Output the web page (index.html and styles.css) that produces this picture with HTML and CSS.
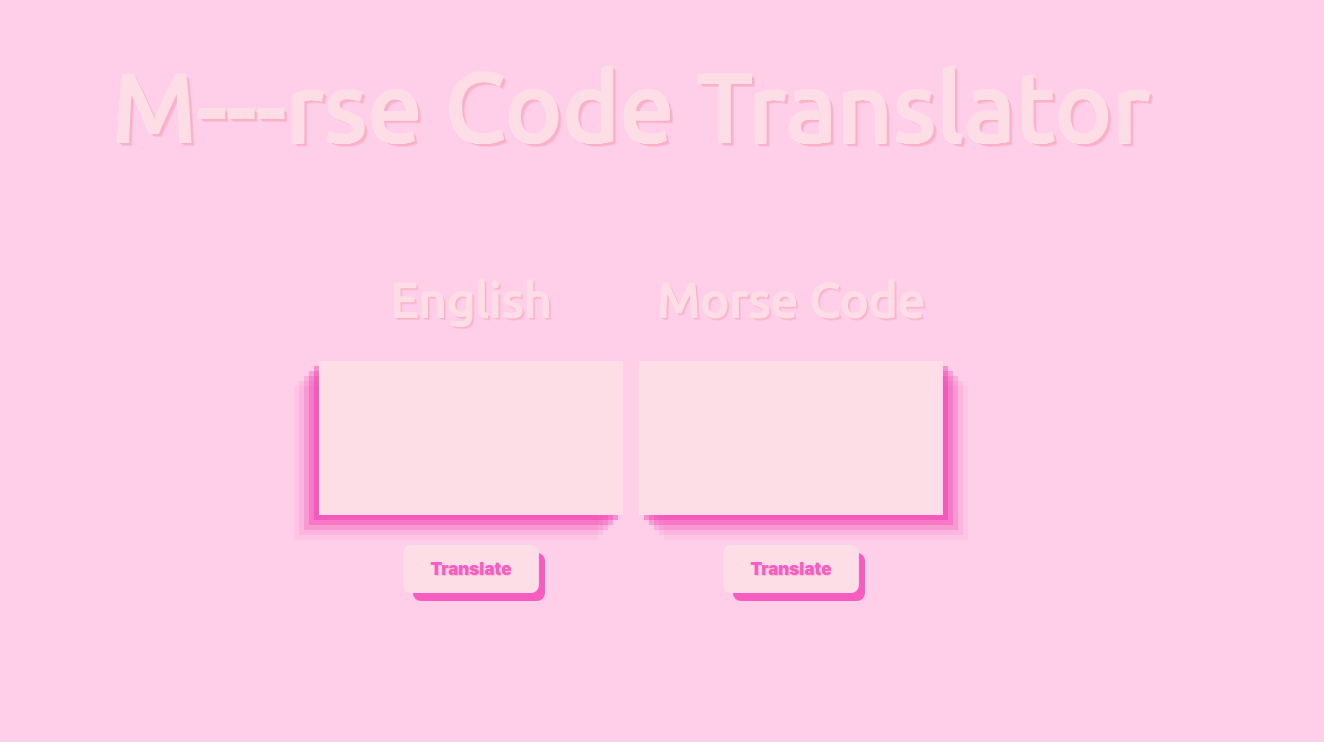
FILE: index.html
```html
<!DOCTYPE html>
<html lang="en">
<head>
<meta charset="utf-8">
<meta name="viewport" content="width=device-width, initial-scale=1">
<title>Morse Code Translator</title>
<link rel="stylesheet" href="styles.css">
</head>
<body class="page">
<h1 class="title">M---rse Code Translator</h1>
<main class="panels">
<section class="panel panel-left">
<label class="heading" for="english">English</label>
<textarea class="box" id="english"></textarea>
<button class="translate" type="button">Translate</button>
</section>
<section class="panel panel-right">
<label class="heading" for="morse">Morse Code</label>
<textarea class="box" id="morse"></textarea>
<button class="translate" type="button">Translate</button>
</section>
</main>
</body>
</html>
```
FILE: styles.css
```css
.page {
  margin: 0;
  padding: 36px 62px 40px 0;
  background: #ffcee9;
  font-family: Ubuntu, "Noto Sans", sans-serif;
  color: #fddde6;
}

.title {
  margin: 0;
  font-size: 97px;
  line-height: 140px;
  font-weight: 500;
  text-align: center;
  -webkit-text-stroke: 2px #fddde6;
  text-shadow: 0 1px #fff0f5, -1px 1px #fff0f5, 2px 2px #f9b0c8, 3px 3px #f9b0c8, 4px 4px #fbbed3;
}

.panels {
  display: flex;
  justify-content: center;
  gap: 16px;
  margin-top: 88px;
}

.panel {
  display: flex;
  flex-direction: column;
  align-items: center;
  width: 304px;
}

.heading {
  font-size: 49px;
  line-height: 70px;
  font-weight: 500;
  white-space: nowrap;
  -webkit-text-stroke: 1px #fddde6;
  text-shadow: 1px 1px #fddde6, 2px 2px #f9b0c8, 3px 3px #fbbed3;
}

.box {
  box-sizing: border-box;
  width: 100%;
  height: 154px;
  margin: 27px 0 30px;
  padding: 8px;
  border: 0;
  outline: 0;
  resize: none;
  background: #fddde6;
  color: #f55abe;
  font: 16px "Liberation Sans", Arial, sans-serif;
}

.panel-left .box {
  box-shadow:
    -5px 5px rgba(240, 46, 170, 0.4),
    -10px 10px rgba(240, 46, 170, 0.3),
    -15px 15px rgba(240, 46, 170, 0.2),
    -20px 20px rgba(240, 46, 170, 0.1),
    -25px 25px rgba(240, 46, 170, 0.05);
}

.panel-right .box {
  box-shadow:
    5px 5px rgba(240, 46, 170, 0.4),
    10px 10px rgba(240, 46, 170, 0.3),
    15px 15px rgba(240, 46, 170, 0.2),
    20px 20px rgba(240, 46, 170, 0.1),
    25px 25px rgba(240, 46, 170, 0.05);
}

.translate {
  position: relative;
  z-index: 0;
  height: 48px;
  width: 136px;
  padding: 0;
  border: 0;
  background: none;
  color: #f75cc0;
  font: 900 17px/48px Inter, "Liberation Sans", Arial, sans-serif;
  text-shadow: 1px 1px #fbc0d8;
  cursor: pointer;
}

.translate::before,
.translate::after {
  content: "";
  position: absolute;
  z-index: -1;
  border-radius: 8px;
}

.translate::before {
  inset: 8px -6px -8px 10px;
  background: #f75cc0;
}

.translate::after {
  inset: 0;
  background: #fddde6;
}
```
